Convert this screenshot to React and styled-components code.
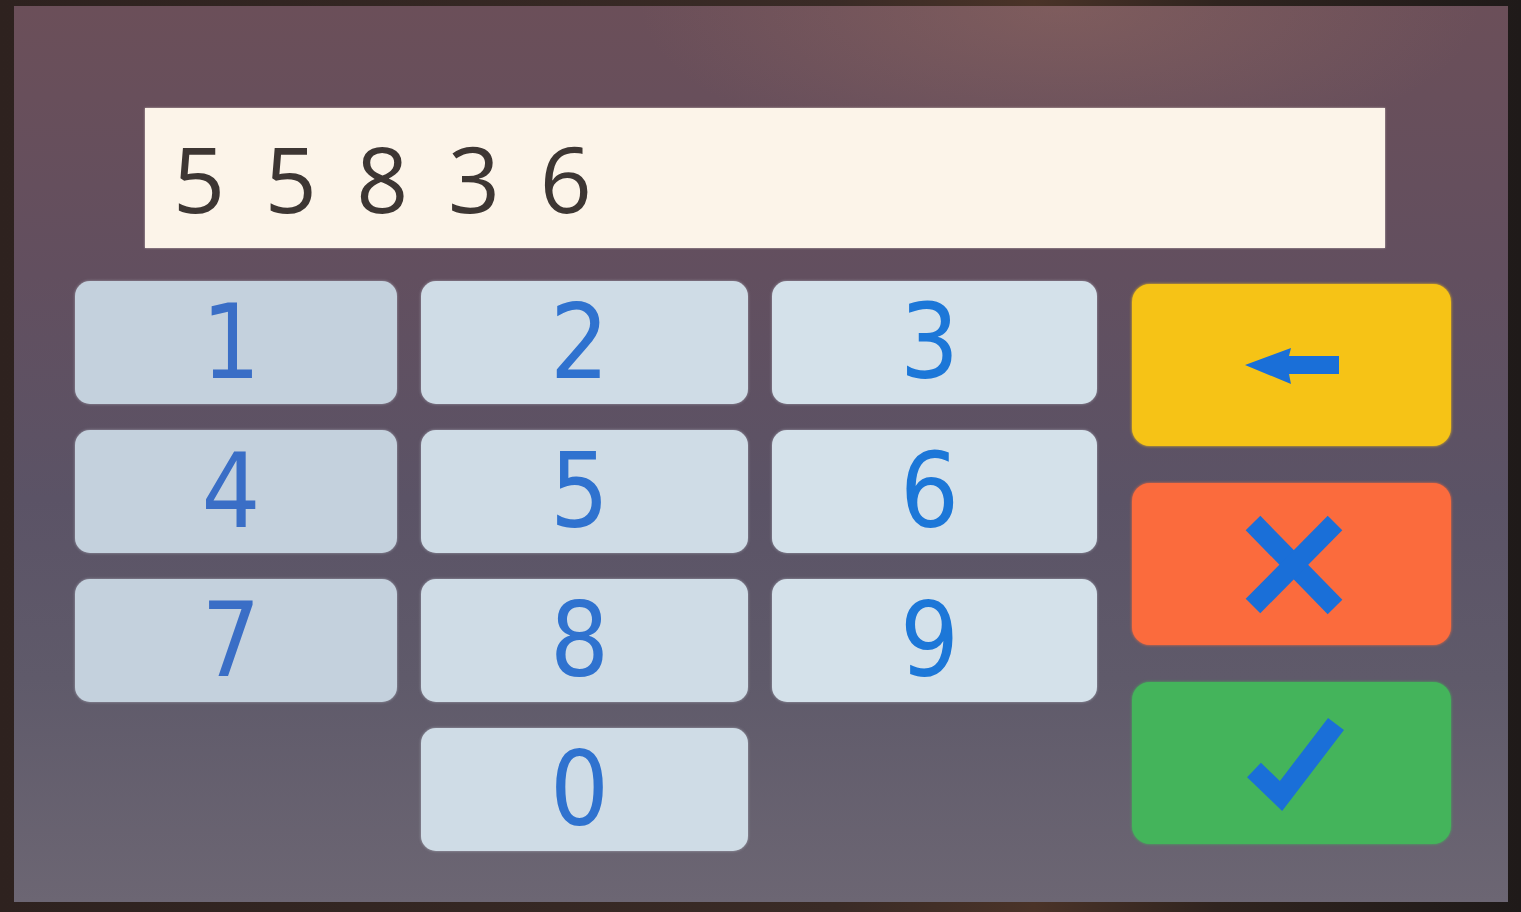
import React from 'react'
import styled, { createGlobalStyle } from 'styled-components'

const GlobalStyle = createGlobalStyle`
  html, body {
    margin: 0;
    padding: 0;
    background: #2a201d;
    overflow: hidden;
  }
`

const Bezel = styled.div`
  width: 1521px;
  height: 912px;
  box-sizing: border-box;
  padding: 6px 13px 10px 14px;
  background: linear-gradient(90deg, #2e221f 0%, #3a2b26 55%, #4a3328 68%, #30241f 80%, #1f1a19 100%);
`

const Screen = styled.div`
  height: 100%;
  box-sizing: border-box;
  padding: 102px 0 0 61px;
  background:
    radial-gradient(ellipse 420px 160px at 70% 0%, rgba(150, 108, 98, 0.45), rgba(150, 108, 98, 0) 100%),
    linear-gradient(180deg, #6b4f59 0%, #624f5f 30%, #5b5366 55%, #5f5a6a 75%, #6c6673 100%);
  display: flex;
  flex-direction: column;
`

const Display = styled.div`
  margin-left: 70px;
  width: 1240px;
  height: 140px;
  box-sizing: border-box;
  padding-left: 28px;
  background: #fcf4e9;
  color: #3d3633;
  font-family: 'Open Sans', 'Noto Sans', sans-serif;
  font-size: 91px;
  letter-spacing: 8px;
  display: flex;
  align-items: center;
  box-shadow: 0 0 2px rgba(255, 250, 240, 0.6);
`

const Body = styled.div`
  display: flex;
  gap: 35px;
  margin-top: 33px;
`

const Keypad = styled.div`
  display: grid;
  grid-template-columns: 322px 327px 325px;
  grid-auto-rows: 123px;
  column-gap: 24px;
  row-gap: 26px;
`

const Key = styled.button`
  grid-column: ${p => p.col || 'auto'};
  border: none;
  border-radius: 15px;
  background: ${p => p.tone};
  color: ${p => p.ink};
  font-family: 'DejaVu Sans', Verdana, sans-serif;
  font-stretch: condensed;
  font-size: 103px;
  line-height: 1;
  display: flex;
  align-items: center;
  justify-content: center;
  padding: 0 10px 0 0;
  box-shadow: 0 0 3px rgba(220, 230, 240, 0.5);
  cursor: pointer;
`

const Actions = styled.div`
  display: flex;
  flex-direction: column;
  gap: 37px;
  margin-top: 3px;
`

const ActionButton = styled.button`
  width: 319px;
  height: 162px;
  border: none;
  border-radius: 18px;
  background: ${p => p.color};
  display: flex;
  align-items: center;
  justify-content: center;
  padding: 0;
  box-shadow: 0 0 3px ${p => p.color};
  cursor: pointer;
`

const Icon = styled.svg`
  width: 110px;
  height: 110px;
  fill: #1a6fd8;
  stroke: #1a6fd8;
`

const ArrowIcon = () => (
  <Icon viewBox="0 0 110 110">
    <polygon points="8,55 54,38 52,46 102,46 102,64 52,64 54,74" stroke="none" />
  </Icon>
)

const CrossIcon = () => (
  <Icon viewBox="0 0 110 110">
    <line x1="16" y1="14" x2="98" y2="98" strokeWidth="20.5" />
    <line x1="98" y1="14" x2="16" y2="97" strokeWidth="20.5" />
  </Icon>
)

const CheckIcon = () => (
  <Icon viewBox="0 0 110 110">
    <polyline points="17,62 44,88 99,16" strokeWidth="20" fill="none" strokeLinejoin="miter" />
  </Icon>
)

const tones = ['#c4d1dd', '#cfdce6', '#d4e1ea']
const inks = ['#3a6ec6', '#2f72cf', '#1c77d8']

const keys = [
  { label: '1', c: 0 }, { label: '2', c: 1 }, { label: '3', c: 2 },
  { label: '4', c: 0 }, { label: '5', c: 1 }, { label: '6', c: 2 },
  { label: '7', c: 0 }, { label: '8', c: 1 }, { label: '9', c: 2 },
  { label: '0', c: 1, col: 2 },
]

export default function App() {
  return (
    <>
      <GlobalStyle />
      <Bezel>
        <Screen>
          <Display>5 5 8 3 6</Display>
          <Body>
            <Keypad>
              {keys.map(k => (
                <Key key={k.label} col={k.col} tone={tones[k.c]} ink={inks[k.c]}>{k.label}</Key>
              ))}
            </Keypad>
            <Actions>
              <ActionButton color="#f6c316"><ArrowIcon /></ActionButton>
              <ActionButton color="#fb6b3d"><CrossIcon /></ActionButton>
              <ActionButton color="#44b45b"><CheckIcon /></ActionButton>
            </Actions>
          </Body>
        </Screen>
      </Bezel>
    </>
  )
}
